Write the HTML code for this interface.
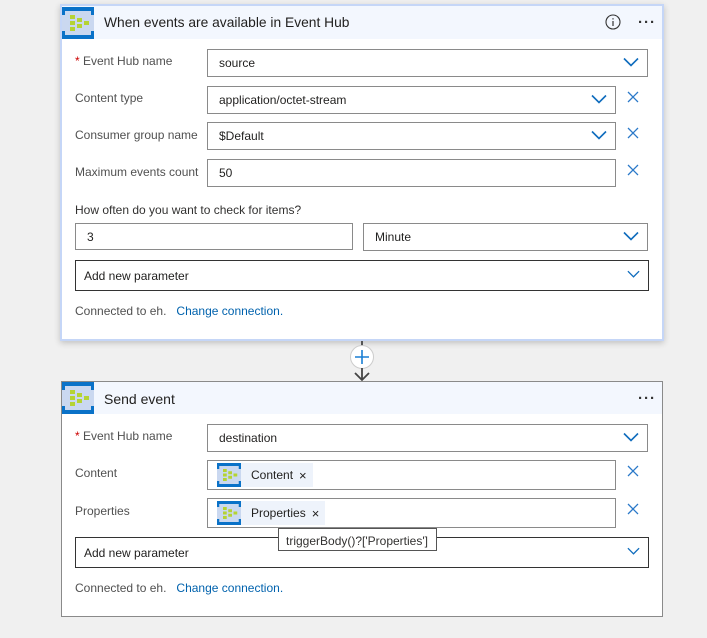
<!DOCTYPE html><html><head><style>
*{box-sizing:border-box;margin:0;padding:0}
body{width:707px;height:638px;background:#f0f0f0;font-family:"Liberation Sans",sans-serif;position:relative;overflow:hidden;color:#323130}
.a{position:absolute}
.card1{left:60px;top:4px;width:604px;height:337px;background:#fff;border:2px solid #c5d6f7;box-shadow:0 2px 6px rgba(0,0,0,.2)}
.card2{left:61px;top:381px;width:602px;height:236px;background:#fff;border:1px solid #8a8a8a}
.hd{position:absolute;left:0;top:0;right:0;height:33px;background:#f3f7fe}
.ttl{position:absolute;left:42px;top:9px;font-size:14px;color:#201f1e}
.lbl{position:absolute;font-size:12px;color:#505050}
.in{position:absolute;border:1px solid #8a8a8a;background:#fff;font-size:12px;color:#201f1e;padding-left:11px;display:flex;align-items:center}
.chev{position:absolute;right:8px;top:50%;margin-top:-6px}
.x{position:absolute}
.lnk{color:#0062ad}
.tok{display:flex;align-items:center;background:#eef3fb;height:24px;margin-left:-2px;padding-right:6px;font-size:12px}
.dots{position:absolute;font-size:15px;font-weight:bold;letter-spacing:1px;color:#333}
</style></head><body>
<svg width="0" height="0" style="position:absolute"><defs>
<symbol id="ic" viewBox="0 0 32 32"><rect width="32" height="32" fill="#cad8f0"/><rect x="0" y="0" width="32" height="4" fill="#0a72c8"/><rect x="0" y="28" width="32" height="4" fill="#0a72c8"/><rect x="0" y="0" width="3" height="8" fill="#0a72c8"/><rect x="29" y="0" width="3" height="8" fill="#0a72c8"/><rect x="0" y="24" width="3" height="8" fill="#0a72c8"/><rect x="29" y="24" width="3" height="8" fill="#0a72c8"/><g fill="#b5d334"><rect x="8" y="8" width="5" height="4"/><rect x="8" y="14" width="5" height="4"/><rect x="8" y="20" width="5" height="4"/><rect x="15" y="11" width="5" height="4"/><rect x="15" y="17" width="5" height="4"/><rect x="22" y="14" width="5" height="4"/></g></symbol>
<symbol id="cv" viewBox="0 0 16 10"><path d="M1 1.5 L8 8.5 L15 1.5" fill="none" stroke="#0f6cbd" stroke-width="1.6"/></symbol>
<symbol id="xx" viewBox="0 0 12 12"><path d="M1 1L11 11M11 1L1 11" stroke="#2b79c9" stroke-width="1.3"/></symbol>
</defs></svg>

<div class="a card1">
 <div class="hd"><svg class="a" style="left:0;top:1px" width="32" height="32"><use href="#ic"/></svg>
 <div class="ttl" style="font-size:13.8px">When events are available in Event Hub</div>
 <svg class="a" style="left:543px;top:8px" width="16" height="16"><circle cx="8" cy="8" r="7" fill="none" stroke="#333" stroke-width="1.1"/><rect x="7.4" y="7" width="1.2" height="5" fill="#333"/><rect x="7.4" y="4.2" width="1.2" height="1.3" fill="#333"/></svg>
 <div class="dots" style="left:576px;top:8px">···</div>
 </div>
</div>
<div class="lbl a" style="left:75px;top:54px"><span style="color:#c00">*</span> Event Hub name</div>
<div class="in" style="left:207px;top:49px;width:441px;height:28px">source<svg class="chev" width="16" height="10"><use href="#cv"/></svg></div>
<div class="lbl a" style="left:75px;top:91px">Content type</div>
<div class="in" style="left:207px;top:86px;width:409px;height:28px">application/octet-stream<svg class="chev" width="16" height="10"><use href="#cv"/></svg></div>
<svg class="x a" style="left:627px;top:91px" width="12" height="12"><use href="#xx"/></svg>
<div class="lbl a" style="left:75px;top:128px">Consumer group name</div>
<div class="in" style="left:207px;top:122px;width:409px;height:28px">$Default<svg class="chev" width="16" height="10"><use href="#cv"/></svg></div>
<svg class="x a" style="left:627px;top:127px" width="12" height="12"><use href="#xx"/></svg>
<div class="lbl a" style="left:75px;top:165px">Maximum events count</div>
<div class="in" style="left:207px;top:159px;width:409px;height:28px">50</div>
<svg class="x a" style="left:627px;top:164px" width="12" height="12"><use href="#xx"/></svg>
<div class="lbl a" style="left:75px;top:203px;color:#323130">How often do you want to check for items?</div>
<div class="in" style="left:75px;top:223px;width:278px;height:27px">3</div>
<div class="in" style="left:363px;top:223px;width:285px;height:28px">Minute<svg class="chev" width="16" height="10"><use href="#cv"/></svg></div>
<div class="in" style="left:75px;top:260px;width:574px;height:31px;border-color:#333;padding-left:8px">Add new parameter<svg class="chev" style="right:8px" width="13" height="8"><use href="#cv"/></svg></div>
<div class="lbl a" style="left:75px;top:304px">Connected to eh. &nbsp;&nbsp;<span class="lnk">Change connection.</span></div>

<div class="a" style="left:361px;top:341px;width:2px;height:6px;background:#555"></div>
<svg class="a" style="left:349px;top:344px" width="26" height="38"><circle cx="13" cy="13" r="11.5" fill="#fff" stroke="#ccc"/><path d="M13 6v14M6 13h14" stroke="#1a7fd4" stroke-width="1.6"/><path d="M13 24v12M6 29l7 7 7-7" fill="none" stroke="#444" stroke-width="1.8"/></svg>

<div class="a card2">
 <div class="hd" style="height:32px"><svg class="a" style="left:0;top:0" width="32" height="32"><use href="#ic"/></svg>
 <div class="ttl" style="top:9px">Send event</div>
 <div class="dots" style="left:576px;top:8px">···</div></div>
</div>
<div class="lbl a" style="left:75px;top:429px"><span style="color:#c00">*</span> Event Hub name</div>
<div class="in" style="left:207px;top:424px;width:441px;height:28px">destination<svg class="chev" width="16" height="10"><use href="#cv"/></svg></div>
<div class="lbl a" style="left:75px;top:466px">Content</div>
<div class="in" style="left:207px;top:460px;width:409px;height:30px;padding-left:11px"><div class="tok"><svg width="24" height="24"><use href="#ic"/></svg><span style="margin-left:10px">Content</span><span style="margin-left:6px;font-size:13px">×</span></div></div>
<svg class="x a" style="left:627px;top:465px" width="12" height="12"><use href="#xx"/></svg>
<div class="lbl a" style="left:75px;top:504px">Properties</div>
<div class="in" style="left:207px;top:498px;width:409px;height:30px;padding-left:11px"><div class="tok"><svg width="24" height="24"><use href="#ic"/></svg><span style="margin-left:10px">Properties</span><span style="margin-left:6px;font-size:13px">×</span></div></div>
<svg class="x a" style="left:627px;top:503px" width="12" height="12"><use href="#xx"/></svg>
<div class="in" style="left:75px;top:537px;width:574px;height:31px;border-color:#333;padding-left:8px">Add new parameter<svg class="chev" style="right:8px" width="13" height="8"><use href="#cv"/></svg></div>
<div class="a" style="left:278px;top:528px;width:159px;height:23px;background:#fff;border:1px solid #555;font-size:12px;padding:5px 0 0 7px">triggerBody()?['Properties']</div>
<div class="lbl a" style="left:75px;top:581px">Connected to eh. &nbsp;&nbsp;<span class="lnk">Change connection.</span></div>
</body></html>
